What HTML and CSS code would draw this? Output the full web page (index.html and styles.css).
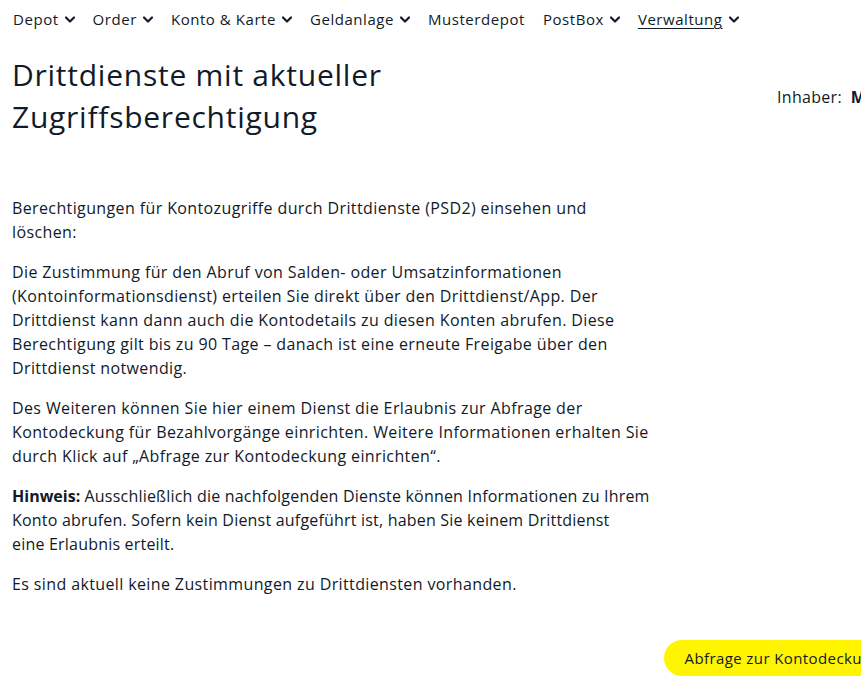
FILE: index.html
```html
<!DOCTYPE html>
<html lang="de">
<head>
<meta charset="utf-8">
<title>Drittdienste</title>
<link rel="stylesheet" href="styles.css">
</head>
<body>
<nav class="topnav">
  <a class="nav-item">Depot <svg class="chev" viewBox="0 0 10 6"><polyline points="1,1 5,5 9,1"/></svg></a>
  <a class="nav-item">Order <svg class="chev" viewBox="0 0 10 6"><polyline points="1,1 5,5 9,1"/></svg></a>
  <a class="nav-item">Konto &amp; Karte <svg class="chev" viewBox="0 0 10 6"><polyline points="1,1 5,5 9,1"/></svg></a>
  <a class="nav-item">Geldanlage <svg class="chev" viewBox="0 0 10 6"><polyline points="1,1 5,5 9,1"/></svg></a>
  <a class="nav-item">Musterdepot</a>
  <a class="nav-item">PostBox <svg class="chev" viewBox="0 0 10 6"><polyline points="1,1 5,5 9,1"/></svg></a>
  <a class="nav-item active"><span class="u">Verwaltung</span> <svg class="chev" viewBox="0 0 10 6"><polyline points="1,1 5,5 9,1"/></svg></a>
</nav>
<main class="page">
  <div class="head-row">
    <h1 class="title">Drittdienste mit aktueller Zugriffsberechtigung</h1>
    <div class="owner">Inhaber:&nbsp; <strong>Max Mustermann</strong></div>
  </div>
  <div class="content">
    <p>Berechtigungen für Kontozugriffe durch Drittdienste (PSD2) einsehen und löschen:</p>
    <p>Die Zustimmung für den Abruf von Salden- oder Umsatzinformationen (Kontoinformationsdienst) erteilen Sie direkt über den Drittdienst/App. Der Drittdienst kann dann auch die Kontodetails zu diesen Konten abrufen. Diese Berechtigung gilt bis zu 90 Tage – danach ist eine erneute Freigabe über den Drittdienst notwendig.</p>
    <p>Des Weiteren können Sie hier einem Dienst die Erlaubnis zur Abfrage der Kontodeckung für Bezahlvorgänge einrichten. Weitere Informationen erhalten Sie durch Klick auf „Abfrage zur Kontodeckung einrichten“.</p>
    <p class="note"><strong>Hinweis:</strong> Ausschließlich die nachfolgenden Dienste können Informationen zu Ihrem Konto abrufen. Sofern kein Dienst aufgeführt ist, haben Sie keinem Drittdienst eine&nbsp;Erlaubnis erteilt.</p>
    <p>Es sind aktuell keine Zustimmungen zu Drittdiensten vorhanden.</p>
  </div>
  <div class="actions">
    <button class="btn-primary">Abfrage zur Kontodeckung einrichten</button>
  </div>
</main>
</body>
</html>
```
FILE: styles.css
```css
html, body {
  margin: 0;
  padding: 0;
  overflow: hidden;
  background: #fff;
}
body {
  font-family: "Open Sans", "Lato", sans-serif;
  color: #111a28;
  font-size: 16px;
  line-height: 24px;
  letter-spacing: 0.38px;
  width: 1020px;
}
.topnav {
  display: flex;
  align-items: center;
  gap: 18px;
  padding: 7px 13px;
  height: 24px;
}
.nav-item {
  display: flex;
  align-items: center;
  gap: 6px;
  font-size: 15px;
  letter-spacing: 0.55px;
  color: #111a28;
  white-space: nowrap;
}
.nav-item .u {
  text-decoration: underline;
  text-underline-offset: 3px;
}
.chev {
  width: 10px;
  height: 7px;
  fill: none;
  stroke: #111a28;
  stroke-width: 2.2;
  stroke-linecap: round;
  stroke-linejoin: round;
}
.page {
  padding: 0 0 0 12px;
}
.head-row {
  display: flex;
  justify-content: space-between;
  align-items: flex-start;
  margin-top: 16px;
}
.title {
  margin: 0;
  font-weight: 400;
  font-size: 30px;
  letter-spacing: 0.75px;
  line-height: 42px;
  width: 440px;
}
.owner {
  margin-top: 31px;
  width: 243px;
  letter-spacing: 0.3px;
  white-space: nowrap;
}
.owner strong {
  font-weight: 700;
}
.content {
  width: 640px;
  margin-top: 58px;
}
.content p {
  margin: 0 0 16px;
}
.content strong {
  font-weight: 700;
}
.content .note {
  letter-spacing: 0.2px;
}
.content .note strong {
  letter-spacing: 0;
}
.actions {
  display: flex;
  justify-content: flex-end;
  margin-top: 44px;
}
.btn-primary {
  font-family: inherit;
  font-size: 15px;
  font-weight: 500;
  letter-spacing: 0.4px;
  color: #111a28;
  background: #fff500;
  border: none;
  border-radius: 18px;
  height: 36px;
  padding: 0 21px;
  margin-right: 40px;
  white-space: nowrap;
}
```
